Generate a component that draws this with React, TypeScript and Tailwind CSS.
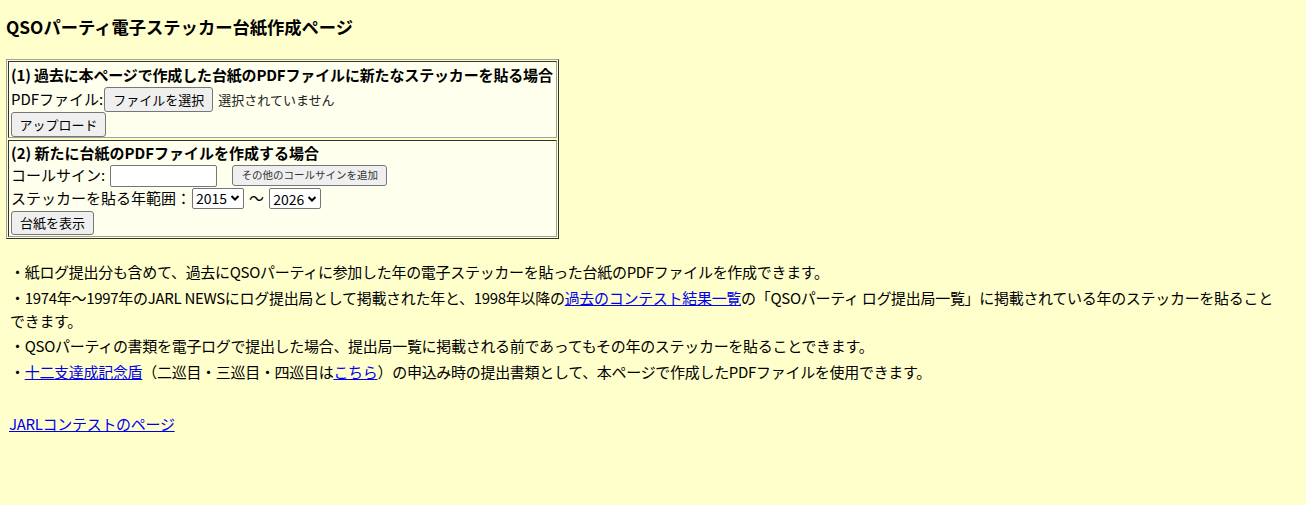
import React from "react";

const Btn = ({
  children,
  className = "",
  small = false,
}: {
  children: React.ReactNode;
  className?: string;
  small?: boolean;
}) => (
  <span
    className={
      "inline-flex items-center justify-center whitespace-nowrap bg-[#efefef] border border-[#767676] rounded-[3px] leading-none " +
      (small ? "text-[10.5px] text-[#333] " : "text-[13px] text-black ") +
      className
    }
  >
    {children}
  </span>
);

const Chevron = () => (
  <svg width="10" height="8" viewBox="0 0 10 8" className="ml-[3px]">
    <path d="M1.5 2 L5 5.5 L8.5 2" fill="none" stroke="#000" strokeWidth="2" />
  </svg>
);

const Sel = ({ value }: { value: string }) => (
  <span className="inline-flex items-center h-[21px] px-[3px] bg-white border border-[#767676] rounded-[2px] text-[14px] leading-none">
    {value}
    <Chevron />
  </span>
);

export default function App() {
  return (
    <div className="min-h-[505px] w-full bg-[#ffffcc] text-black font-['Noto_Sans_CJK_JP','Noto_Sans',sans-serif] text-[15px]">
      <div className="pl-[6px] pt-[14px]">
        <h1 className="text-[17.3px] font-bold leading-[26px] h-[26px]">QSOパーティ電子ステッカー台紙作成ページ</h1>
      </div>
      <div className="pl-[6px] pt-[19px]">
        <div className="w-[553px] border border-t-[#a0a0a0] border-l-[#a0a0a0] border-r-[#333] border-b-[#333] p-[1px] flex flex-col gap-[2px]">
          <div className="border border-t-[#333] border-l-[#333] border-r-[#a0a0a0] border-b-[#a0a0a0] bg-[#ffffee] px-[2px] pt-[1px] pb-[1px] h-[77px]">
            <div className="font-bold h-[24px] leading-[24px] whitespace-nowrap tracking-[-0.15px]">(1) 過去に本ページで作成した台紙のPDFファイルに新たなステッカーを貼る場合</div>
            <div className="flex items-center h-[25px]">
              <span>PDFファイル:</span>
              <Btn className="h-[25px] w-[109px] ml-[1px]">ファイルを選択</Btn>
              <span className="ml-[5px] text-[13px] text-[#222]">選択されていません</span>
            </div>
            <div className="flex items-center h-[25px]">
              <Btn className="h-[25px] w-[95px]">アップロード</Btn>
            </div>
          </div>
          <div className="border border-t-[#333] border-l-[#333] border-r-[#a0a0a0] border-b-[#a0a0a0] bg-[#ffffee] px-[2px] pt-[1px] pb-[1px] h-[97px]">
            <div className="font-bold h-[22px] leading-[22px] whitespace-nowrap">(2) 新たに台紙のPDFファイルを作成する場合</div>
            <div className="flex items-center h-[23px]">
              <span>コールサイン:</span>
              <span className="ml-[5px] inline-block w-[107px] h-[22px] bg-white border border-[#767676] rounded-[2px]"></span>
              <Btn small className="ml-[15px] h-[21px] w-[155px]">その他のコールサインを追加</Btn>
            </div>
            <div className="flex items-center h-[23px]">
              <span>ステッカーを貼る年範囲：</span>
              <span className="ml-[1px]"><Sel value="2015" /></span>
              <span className="mx-[5px]">〜</span>
              <Sel value="2026" />
            </div>
            <div className="flex items-center h-[25px]">
              <Btn className="h-[24px] w-[83px]">台紙を表示</Btn>
            </div>
          </div>
        </div>
      </div>
      <div className="pl-[10px] pt-[21px] text-[15px] leading-[23px] w-[1285px] tracking-[-0.3px]">
        <p className="mb-[3px] whitespace-nowrap">・紙ログ提出分も含めて、過去にQSOパーティに参加した年の電子ステッカーを貼った台紙のPDFファイルを作成できます。</p>
        <p className="mb-[2px]">
          ・1974年〜1997年のJARL NEWSにログ提出局として掲載された年と、1998年以降の
          <a className="text-[#0000ee] underline">過去のコンテスト結果一覧</a>
          の「QSOパーティ ログ提出局一覧」に掲載されている年のステッカーを貼ることできます。
        </p>
        <p className="mb-[3px] whitespace-nowrap">・QSOパーティの書類を電子ログで提出した場合、提出局一覧に掲載される前であってもその年のステッカーを貼ることできます。</p>
        <p className="whitespace-nowrap">
          ・<a className="text-[#0000ee] underline">十二支達成記念盾</a>（二巡目・三巡目・四巡目は
          <a className="text-[#0000ee] underline">こちら</a>
          ）の申込み時の提出書類として、本ページで作成したPDFファイルを使用できます。
        </p>
      </div>
      <div className="pl-[9px] pt-[29px] text-[15px] leading-[23px] tracking-[-0.3px]">
        <a className="text-[#0000ee] underline">JARLコンテストのページ</a>
      </div>
    </div>
  );
}
